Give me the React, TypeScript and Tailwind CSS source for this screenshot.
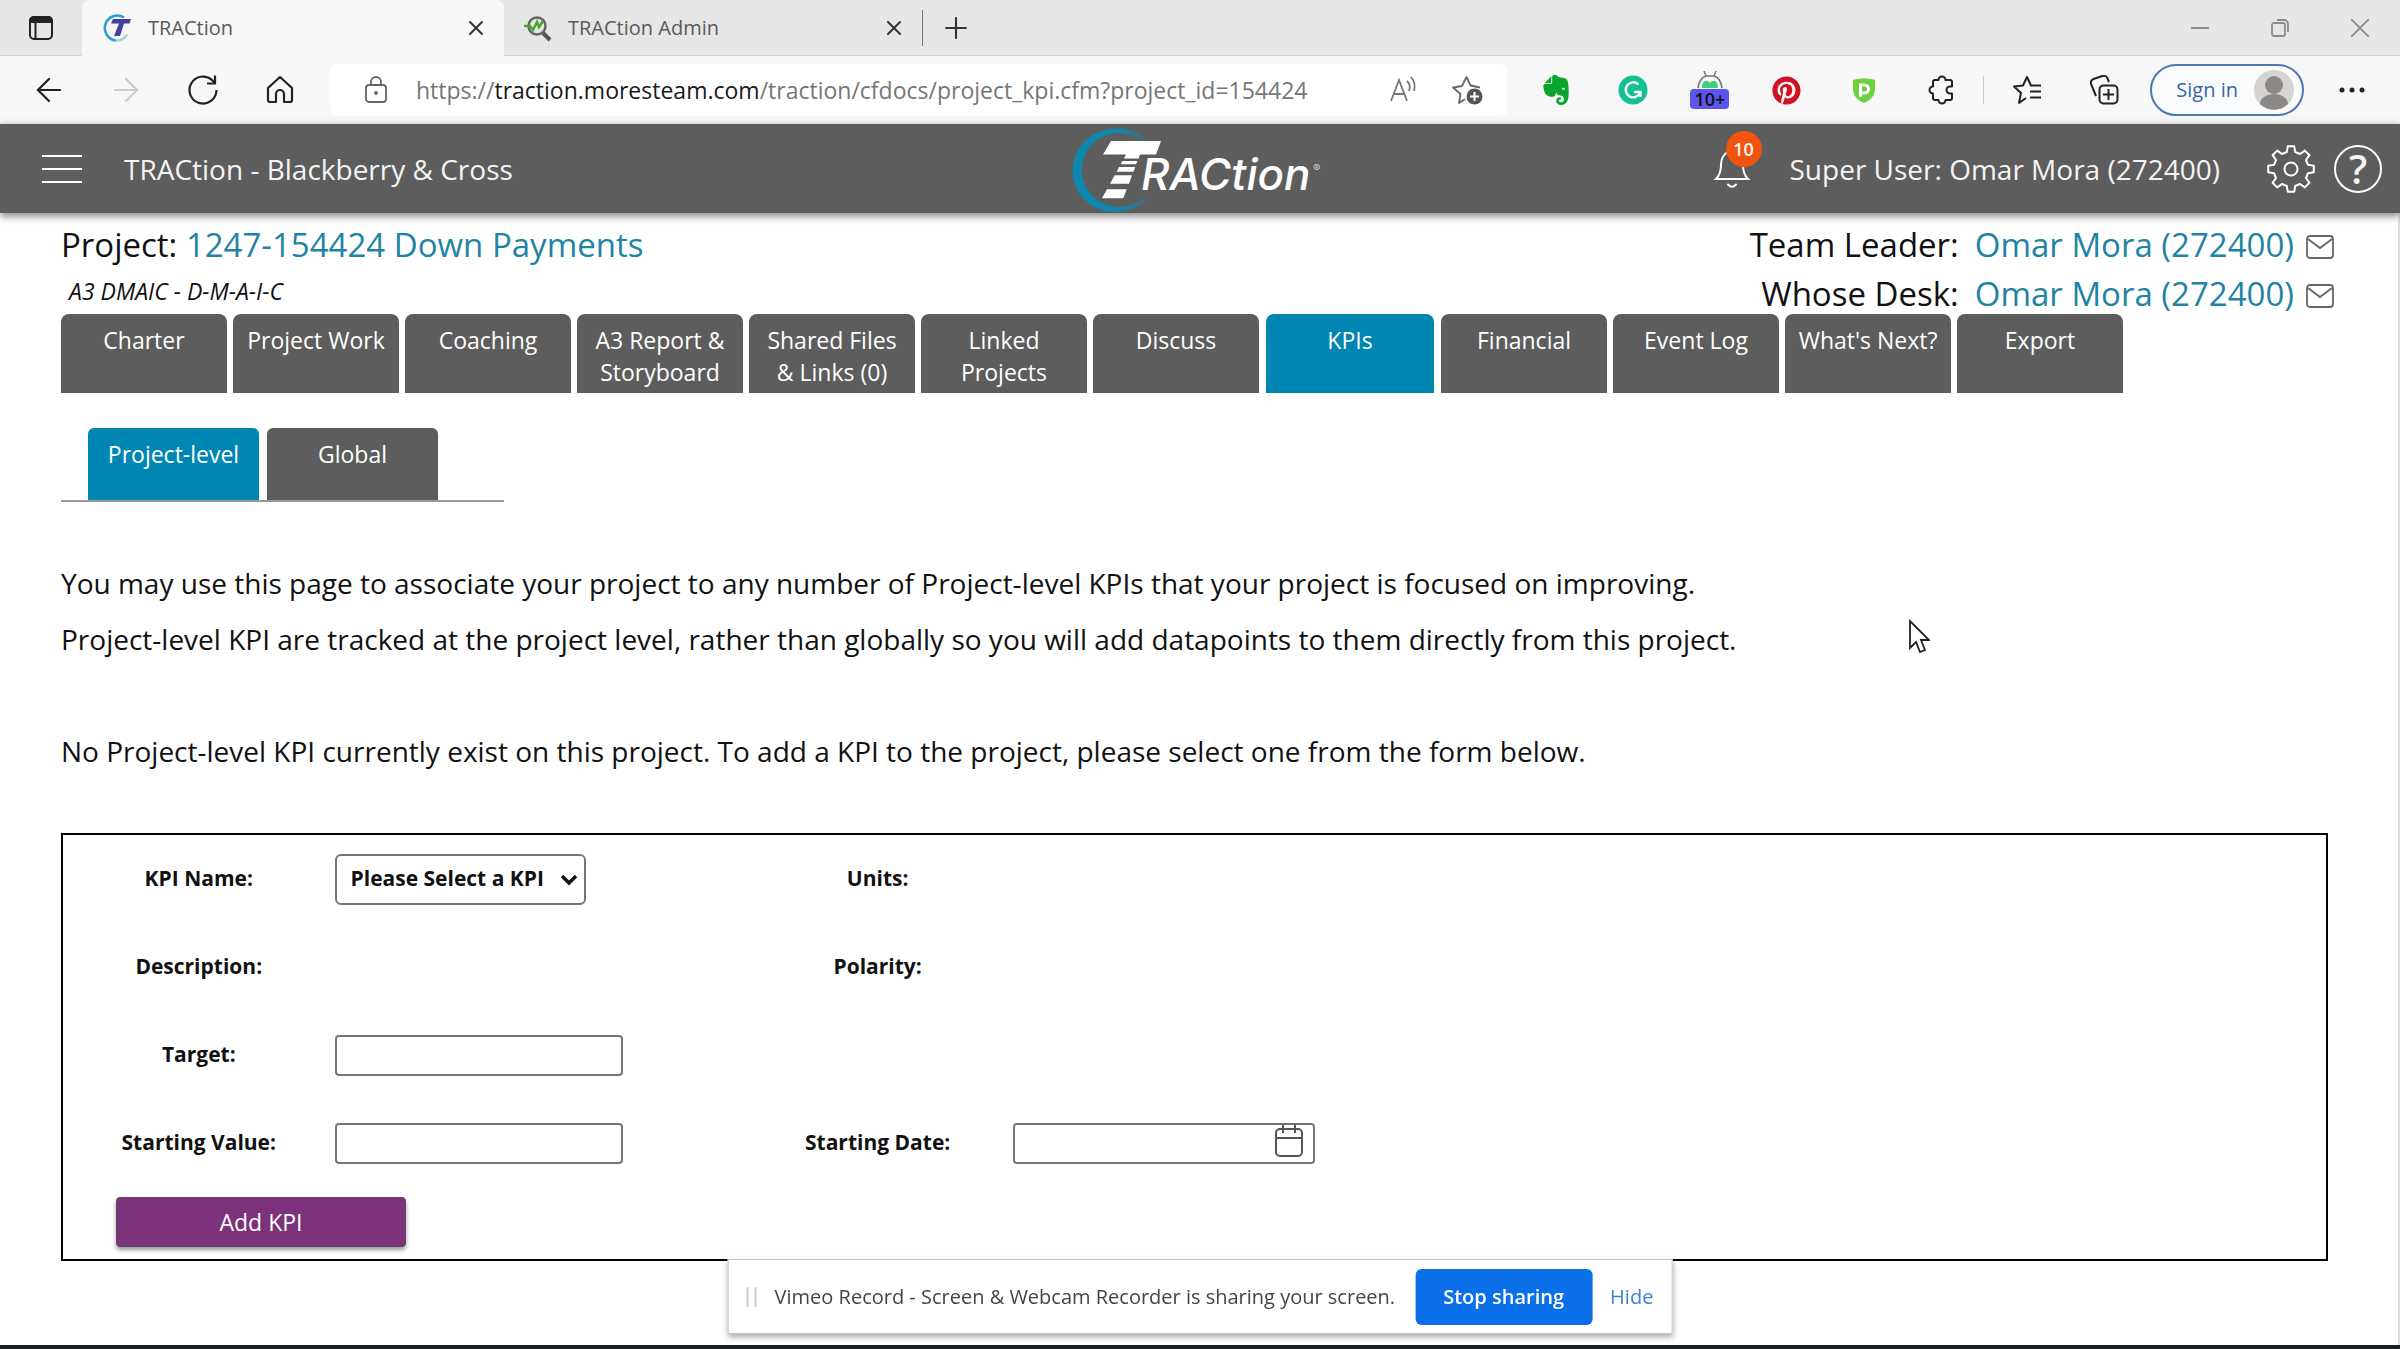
import { useState } from 'react';
import type { ReactNode } from 'react';
import { SiEvernote } from 'react-icons/si';
import { FaPinterest } from 'react-icons/fa';
import { ArrowLeft, ArrowRight, Plus, X } from 'lucide-react';

const TABS = [
  'Charter',
  'Project Work',
  'Coaching',
  'A3 Report & Storyboard',
  'Shared Files & Links (0)',
  'Linked Projects',
  'Discuss',
  'KPIs',
  'Financial',
  'Event Log',
  "What's Next?",
  'Export',
];
const SUB_TABS = ['Project-level', 'Global'];

const GEAR_TEETH = 8;

// Outline of the settings gear: each tooth is two outer points between two inner ones
const gearPoints = Array.from({ length: GEAR_TEETH }, (_, i) => {
  const mid = (i * 360) / GEAR_TEETH;
  return [
    [mid - 14, 17.5],
    [mid - 8, 23],
    [mid + 8, 23],
    [mid + 14, 17.5],
  ]
    .map(([angle, r]) => {
      const rad = (angle * Math.PI) / 180;
      return `${(25 + r * Math.cos(rad)).toFixed(1)},${(25 + r * Math.sin(rad)).toFixed(1)}`;
    })
    .join(' ');
}).join(' ');

function IconButton({ label, className = '', children }: { label: string; className?: string; children: ReactNode }) {
  return (
    <button aria-label={label} className={`flex shrink-0 items-center justify-center ${className}`}>
      {children}
    </button>
  );
}

function TabStrip() {
  return (
    <div className="flex h-14 items-stretch bg-[#e6e6e6] text-xl text-[#5a5a5a]">
      <IconButton label="Tab actions" className="w-[82px] border-b border-[#d4d4d4]">
        <svg width="26" height="26" viewBox="0 0 26 26" fill="none" stroke="#222" strokeWidth="2">
          <rect x="2" y="2" width="22" height="22" rx="4" />
          <path d="M2 7V6a4 4 0 0 1 4-4h14a4 4 0 0 1 4 4v1z" fill="#222" />
          <path d="M7.500 8v16" />
        </svg>
      </IconButton>
      <div className="flex w-[422px] items-center rounded-t-lg bg-[#f7f7f7] pr-4 pl-5">
        <svg width="30" height="28" viewBox="0 0 30 28" fill="none">
          <path d="M22 3.500A12.500 12.500 0 1 0 14 26.500" stroke="#2a9fd4" strokeWidth="2.500" />
          <path d="M14 26.500a12 12 0 0 0 11-6" stroke="#a5cfe3" strokeWidth="2.500" />
          <path d="M11 5h18l-1.500 4.500h-5.500L18 22h-6l5-12.500H9z" fill="#43419f" />
        </svg>
        <span className="ml-4 flex-1">TRACtion</span>
        <IconButton label="Close tab">
          <X size={24} strokeWidth={2} color="#333" />
        </IconButton>
      </div>
      <div className="flex w-[418px] items-center border-b border-[#d4d4d4] pr-4 pl-5">
        <svg width="28" height="28" viewBox="0 0 28 28" fill="none">
          <circle cx="13" cy="12" r="8.500" stroke="#666" strokeWidth="2.500" />
          <path d="M19 19l7 7" stroke="#555" strokeWidth="4" />
          <path d="M0 12h6l3 4 4-8 2 5 4-6" stroke="#4aa52e" strokeWidth="2.500" />
        </svg>
        <span className="ml-4 flex-1">TRACtion Admin</span>
        <IconButton label="Close tab">
          <X size={24} strokeWidth={2} color="#333" />
        </IconButton>
      </div>
      <div className="flex flex-1 items-center border-b border-[#d4d4d4]">
        <div className="h-9 w-px bg-[#777]" />
        <IconButton label="New tab" className="ml-4">
          <Plus size={34} strokeWidth={1.5} color="#333" />
        </IconButton>
        <div className="ml-auto flex">
          <IconButton label="Minimize" className="w-20">
            <svg width="18" height="18" viewBox="0 0 18 18" stroke="#8a8a8a" strokeWidth="2">
              <path d="M0 9h18" />
            </svg>
          </IconButton>
          <IconButton label="Restore" className="w-20">
            <svg width="18" height="18" viewBox="0 0 18 18" fill="none" stroke="#8a8a8a" strokeWidth="1.800">
              <rect x="1" y="4" width="13" height="13" rx="2" />
              <path d="M6 1h7a4 4 0 0 1 4 4v8" />
            </svg>
          </IconButton>
          <IconButton label="Close window" className="w-20">
            <svg width="18" height="18" viewBox="0 0 18 18" stroke="#8a8a8a" strokeWidth="1.800">
              <path d="M0 0l18 18M18 0L0 18" />
            </svg>
          </IconButton>
        </div>
      </div>
    </div>
  );
}

function AddressBar() {
  return (
    <div className="ml-3 flex h-[52px] flex-1 items-center rounded-md bg-white pr-6 pl-[34px]">
      <svg width="24" height="28" viewBox="0 0 24 28" fill="none" stroke="#666" strokeWidth="1.800">
        <rect x="2" y="9" width="20" height="17" rx="3" />
        <path d="M7 9V6a5 5 0 0 1 10 0v3" />
        <circle cx="12" cy="17" r="1" fill="#666" />
      </svg>
      <span className="ml-7 flex-1 text-[23px] text-[#767676]">
        https://<span className="text-[#1a1a1a]">traction.moresteam.com</span>
        /traction/cfdocs/project_kpi.cfm?project_id=154424
      </span>
      <IconButton label="Read aloud">
        <svg width="30" height="28" viewBox="0 0 30 28" fill="none" stroke="#767676" strokeWidth="1.800">
          <path d="M2 25L10 4l8 21M5 18h10" />
          <path d="M18 5a9 9 0 0 1 2 10M22 1a15 15 0 0 1 3 14" />
        </svg>
      </IconButton>
      <IconButton label="Add to favorites" className="ml-8">
        <svg width="32" height="32" viewBox="0 0 32 32" fill="none" stroke="#666" strokeWidth="1.800">
          <path d="M14 25l-6 4 1.500-9L2 13.500l9-1.500L15.500 3l4 8.500 9.500 2" strokeLinejoin="round" />
          <circle cx="23.500" cy="22.500" r="8" fill="#555" stroke="none" />
          <path d="M23.500 18v9M19 22.500h9" stroke="#fff" strokeWidth="2" />
        </svg>
      </IconButton>
    </div>
  );
}

function Toolbar() {
  return (
    <div className="flex h-[68px] items-center bg-[#f7f7f7] pl-2.5">
      <IconButton label="Back" className="w-[77px]">
        <ArrowLeft size={38} strokeWidth={1.4} color="#222" />
      </IconButton>
      <IconButton label="Forward" className="w-[77px]">
        <ArrowRight size={38} strokeWidth={1.4} color="#ccc" />
      </IconButton>
      <IconButton label="Refresh" className="w-[77px]">
        <svg width="32" height="32" viewBox="0 0 32 32" fill="none" stroke="#222" strokeWidth="2.200">
          <path d="M29.500 16A13.500 13.500 0 1 1 25 6L28 9M28 1.500V9.500h-8" />
        </svg>
      </IconButton>
      <IconButton label="Home" className="w-[77px]">
        <svg width="28" height="30" viewBox="0 0 28 30" fill="none" stroke="#222" strokeWidth="2.200" strokeLinejoin="round">
          <path d="M2 13L14 2l12 11v12a2 2 0 0 1-2 2h-6v-8a4 4 0 0 0-8 0v8H4a2 2 0 0 1-2-2z" />
        </svg>
      </IconButton>
      <AddressBar />
      <IconButton label="Evernote" className="ml-2.5 w-[77px]">
        <SiEvernote size={30} color="#0aa52c" />
      </IconButton>
      <IconButton label="Grammarly" className="w-[77px]">
        <svg width="30" height="30" viewBox="0 0 30 30" fill="none">
          <circle cx="15" cy="15" r="14.500" fill="#15bf94" />
          <path d="M20.500 9.500A7.500 7.500 0 1 0 22 18M16 17h6.500v5" stroke="#fff" strokeWidth="2.400" />
        </svg>
      </IconButton>
      <IconButton label="Tracker" className="h-12 w-[77px] flex-col">
        <svg width="28" height="18" viewBox="0 0 28 18" fill="none">
          <path d="M2 17C3 10 6 6 10 5M26 17c-1-7-4-11-8-12" stroke="#777" strokeWidth="1.800" />
          <path d="M8 0l2 5h8l2-5" stroke="#777" strokeWidth="1.500" />
          <path d="M6 17c0-8 5-9 8-5 3-4 8-3 8 5z" fill="#3bd17f" />
        </svg>
        <span className="rounded-sm bg-[#5b55ee] px-1 text-lg leading-5 font-semibold text-[#111]">10+</span>
      </IconButton>
      <IconButton label="Pinterest" className="w-[77px]">
        <FaPinterest size={29} color="#cf1322" />
      </IconButton>
      <IconButton label="PureVPN" className="w-[77px]">
        <svg width="22" height="26" viewBox="0 0 22 26">
          <path d="M0 3C7 1 15 1 22 3v9c0 6-4 11-11 14C4 23 0 18 0 12z" fill="#6ad23c" />
          <path d="M7.500 20V8h4a4 4 0 0 1 0 8H8" fill="none" stroke="#fff" strokeWidth="3" />
        </svg>
      </IconButton>
      <IconButton label="Extensions" className="w-[77px]">
        <svg width="28" height="30" viewBox="0 0 28 30" fill="none" stroke="#222" strokeWidth="2" strokeLinejoin="round">
          <path d="M6 11.500V7a2 2 0 0 1 2-2h3.500a3.500 3.500 0 0 1 7 0H23a2 2 0 0 1 2 2v4.500h-2a3.500 3.500 0 0 0 0 7h2V23a2 2 0 0 1-2 2h-4.500a3.500 3.500 0 0 1-7 0H8a2 2 0 0 1-2-2v-4.500a3.500 3.500 0 0 1 0-7z" />
        </svg>
      </IconButton>
      <div className="ml-1 h-7 w-px bg-[#ccc]" />
      <IconButton label="Favorites" className="ml-1 w-[77px]">
        <svg width="30" height="30" viewBox="0 0 30 30" fill="none" stroke="#222" strokeWidth="2" strokeLinejoin="round">
          <path d="M14 23l-7 5 2-10-7-6.500 9-1L15 2l4 8.500h10M18 16.500h11M18 22.500h11" />
        </svg>
      </IconButton>
      <IconButton label="Collections" className="w-[77px]">
        <svg width="30" height="30" viewBox="0 0 30 30" fill="none" stroke="#222" strokeWidth="2">
          <rect x="10.500" y="10.500" width="18" height="18" rx="4" />
          <path d="M19.500 14v11M14 19.500h11M7 21L2 9a4 4 0 0 1 2.500-5l9-3a4 4 0 0 1 5 2.500L20 7" />
        </svg>
      </IconButton>
      <button className="ml-2 flex h-[52px] items-center gap-4 rounded-full border-2 border-[#4a78b0] bg-[#f9fbfd] pr-2 pl-6 text-xl text-[#3a66a8]">
        Sign in
        <svg width="40" height="40" viewBox="0 0 40 40">
          <circle cx="20" cy="20" r="20" fill="#d6d4d2" />
          <circle cx="20" cy="15" r="9" fill="#8b8885" />
          <path d="M6 34a14 10 0 0 1 28 0 20 20 0 0 1-28 0z" fill="#8b8885" />
        </svg>
      </button>
      <IconButton label="Settings and more" className="w-24">
        <svg width="26" height="6" viewBox="0 0 26 6" fill="#222">
          <circle cx="3" cy="3" r="2.500" />
          <circle cx="13" cy="3" r="2.500" />
          <circle cx="23" cy="3" r="2.500" />
        </svg>
      </IconButton>
    </div>
  );
}

function Logo() {
  return (
    <svg width="260" height="88" viewBox="0 0 260 88" role="img" aria-label="TRACtion">
      <defs>
        <linearGradient id="ring" x1="0" x2="1">
          <stop offset="0.600" stopColor="#0d87ad" />
          <stop offset="1" stopColor="#0d87ad" stopOpacity="0.200" />
        </linearGradient>
      </defs>
      <path d="M76 14A41.500 41.500 0 1 0 78 74L75 71A37 37 0 1 1 73 17z" fill="url(#ring)" />
      <path d="M44 4A41.500 41.500 0 0 0 44 87V84A35 38 0 0 1 44 7z" fill="#0d87ad" />
      <g fill="#fff">
        <path d="M41 16h50l-5 13.500H70l-1.500 4H54l2-4H33z" />
        <path d="M52.300 36h15l-1.200 3.300H50.700z" />
        <path d="M49 42h16.300l-1.900 4.700H46.700z" />
        <path d="M44.700 50.300h17.300l-3 8.400H40z" />
        <path d="M37 64.300h19.700l-3.400 9H32z" />
      </g>
      <text x="71" y="65" fontFamily="Inter" fontStyle="italic" fontWeight="500" fontSize="44" fill="#fff">
        RACtion
      </text>
      <text x="243" y="47" fontFamily="Inter" fontSize="11" fill="#ccc">
        ®
      </text>
    </svg>
  );
}

function AppHeader() {
  return (
    <header className="relative z-10 grid h-[89px] grid-cols-[1fr_auto_1fr] items-center bg-[#5d5d5d] px-[18px] text-[28px] font-medium text-[#f4f4f4] shadow-[0_3px_8px_rgba(0,0,0,0.5)]">
      <div className="flex items-center pl-6">
        <IconButton label="Menu">
          <svg width="40" height="32" viewBox="0 0 40 32" stroke="#fff" strokeWidth="2">
            <path d="M0 3h40M0 16h40M0 29h40" />
          </svg>
        </IconButton>
        <span className="ml-[42px]">TRACtion - Blackberry &amp; Cross</span>
      </div>
      <Logo />
      <div className="flex items-center justify-end">
        <IconButton label="Notifications" className="relative">
          <svg width="36" height="40" viewBox="0 0 36 40" fill="none" stroke="#fff" strokeWidth="2" strokeLinecap="round">
            <path d="M2 30h32c-4-4-5-8-5-14 0-8-5-14-11-14S7 8 7 16c0 6-1 10-5 14z" />
            <path d="M14 35.500q4 4.500 8 0" />
          </svg>
          <span className="absolute -top-[18px] left-3 flex size-9 items-center justify-center rounded-full bg-[#f2540f] text-lg font-semibold">10</span>
        </IconButton>
        <span className="ml-10">Super User: Omar Mora (272400)</span>
        <IconButton label="Settings" className="ml-[46px]">
          <svg width="50" height="50" viewBox="0 0 50 50" fill="none" stroke="#fff" strokeWidth="2" strokeLinejoin="round">
            <polygon points={gearPoints} />
            <circle cx="25" cy="25" r="6.500" />
          </svg>
        </IconButton>
        <button className="ml-[18px] flex size-12 items-center justify-center rounded-full border-2 border-white text-[40px] leading-none font-semibold">?</button>
      </div>
    </header>
  );
}

function MailIcon() {
  return (
    <svg width="28" height="24" viewBox="0 0 28 24" fill="none" stroke="#666" strokeWidth="1.800">
      <rect x="1" y="1" width="26" height="22" rx="3" />
      <path d="M2 4l12 9L26 4" />
    </svg>
  );
}

function Person({ role }: { role: string }) {
  return (
    <div className="flex items-center">
      <span>{role}:</span>
      <a href="#" className="ml-4 text-[#1f83a3]">Omar Mora (272400)</a>
      <a href="#" aria-label="Send mail" className="mt-1 ml-3">
        <MailIcon />
      </a>
    </div>
  );
}

function KpiForm() {
  const [target, setTarget] = useState('');
  const [startingValue, setStartingValue] = useState('');
  const [startingDate, setStartingDate] = useState('');

  return (
    <form className="mt-[54px] border-2 border-black text-[21px]" onSubmit={e => e.preventDefault()}>
      <div className="grid auto-rows-[88px] grid-cols-[12%_18%_12%_1fr] items-center">
        <label htmlFor="kpi" className="text-center font-bold">KPI Name:</label>
        <div className="relative w-[251px]">
          <select id="kpi" className="h-[51px] w-full appearance-none rounded-md border-2 border-[#767676] bg-white px-3.5 font-bold">
            <option>Please Select a KPI</option>
          </select>
          <svg className="pointer-events-none absolute top-5 right-2" width="18" height="12" viewBox="0 0 18 12" fill="none" stroke="#111" strokeWidth="3.500">
            <path d="M2 2l7 7 7-7" />
          </svg>
        </div>
        <span className="text-center font-bold">Units:</span>
        <span />
        <span className="text-center font-bold">Description:</span>
        <span />
        <span className="text-center font-bold">Polarity:</span>
        <span />
        <label htmlFor="target" className="text-center font-bold">Target:</label>
        <input id="target" value={target} onChange={e => setTarget(e.target.value)} className="col-span-3 h-[41px] w-[288px] rounded-sm border-2 border-[#767676] px-2" />
        <label htmlFor="start" className="text-center font-bold">Starting Value:</label>
        <input id="start" value={startingValue} onChange={e => setStartingValue(e.target.value)} className="h-[41px] w-[288px] rounded-sm border-2 border-[#767676] px-2" />
        <label htmlFor="date" className="text-center font-bold">Starting Date:</label>
        <div className="relative w-[302px]">
          <input id="date" value={startingDate} onChange={e => setStartingDate(e.target.value)} className="block h-[41px] w-full rounded-sm border-2 border-[#767676] px-2" />
          <svg className="absolute top-0.5 right-3" width="28" height="32" viewBox="0 0 28 32" fill="none" stroke="#555" strokeWidth="2">
            <rect x="1" y="4" width="26" height="27" rx="4" />
            <path d="M1 13h26M8 0v8M20 0v8" />
          </svg>
        </div>
      </div>
      <button className="mt-2.5 mb-3 ml-[53px] h-[50px] w-[290px] rounded border border-[#5f4a66] bg-[#7b327b] text-[23px] text-white shadow-[0_3px_4px_rgba(0,0,0,0.4)]">Add KPI</button>
    </form>
  );
}

function SharingBar() {
  return (
    <div className="fixed bottom-[15px] left-1/2 flex h-[75px] -translate-x-1/2 items-center border border-[#c4c4c4] bg-white px-[18px] text-xl text-[#444] shadow-[0_3px_6px_rgba(0,0,0,0.35)]">
      <div className="h-5 w-2.5 border-x-2 border-[#ccc]" />
      <span className="ml-[18px]">Vimeo Record - Screen &amp; Webcam Recorder is sharing your screen.</span>
      <button className="ml-5 h-14 w-[177px] rounded-md bg-[#0a6fe8] font-semibold text-white">Stop sharing</button>
      <button className="ml-[18px] text-[#3f7fd0]">Hide</button>
    </div>
  );
}

export default function App() {
  return (
    <div className="relative flex min-h-screen flex-col bg-white font-['Open_Sans',sans-serif] text-[#111]">
      <TabStrip />
      <Toolbar />
      <AppHeader />
      <main className="flex-1 border-r-2 border-[#ddd] pt-[7px] pr-[70px] pl-[61px]">
        <div className="flex justify-between text-[33px] leading-[49px]">
          <div>
            <div>Project: <a href="#" className="text-[#1f83a3]">1247-154424 Down Payments</a></div>
            <div className="ml-2 text-[23px] leading-[44px] italic">A3 DMAIC - D-M-A-I-C</div>
          </div>
          <div className="-mr-1.5 flex flex-col items-end">
            <Person role="Team Leader" />
            <Person role="Whose Desk" />
          </div>
        </div>
        <nav className="-mt-1 flex gap-1.5">
          {TABS.map(tab => (
            <button key={tab} className={`flex h-[79px] justify-center rounded-t-lg px-2 pt-2.5 text-[23px] leading-8 font-medium text-white ${tab === 'KPIs' ? 'mx-px w-[168px] bg-[#0086b3]' : 'w-[166px] bg-[#5d5d5d]'}`}>
              {tab}
            </button>
          ))}
        </nav>
        <div className="mt-[35px] flex w-[443px] gap-2 border-b-2 border-[#999] pl-[27px]">
          {SUB_TABS.map((tab, i) => (
            <button key={tab} className={`flex h-[72px] w-[171px] justify-center rounded-t-md pt-2.5 text-[23px] leading-8 font-medium text-white ${i === 0 ? 'bg-[#0086b3]' : 'bg-[#5d5d5d]'}`}>
              {tab}
            </button>
          ))}
        </div>
        <div className="mt-[53px] text-[28px] leading-[56px]">
          <p>You may use this page to associate your project to any number of Project-level KPIs that your project is focused on improving.</p>
          <p>Project-level KPI are tracked at the project level, rather than globally so you will add datapoints to them directly from this project.</p>
          <p className="mt-14">No Project-level KPI currently exist on this project. To add a KPI to the project, please select one from the form below.</p>
        </div>
        <KpiForm />
      </main>
      <div className="h-1 bg-[#1b1e20]" />
      <SharingBar />
      <svg className="absolute top-[619px] left-[1908px]" width="22" height="36" viewBox="0 0 22 36" fill="#fff" stroke="#222" strokeWidth="1.800">
        <path d="M2 2v27l6-6 4 10 5-2-4-10h8z" />
      </svg>
    </div>
  );
}
